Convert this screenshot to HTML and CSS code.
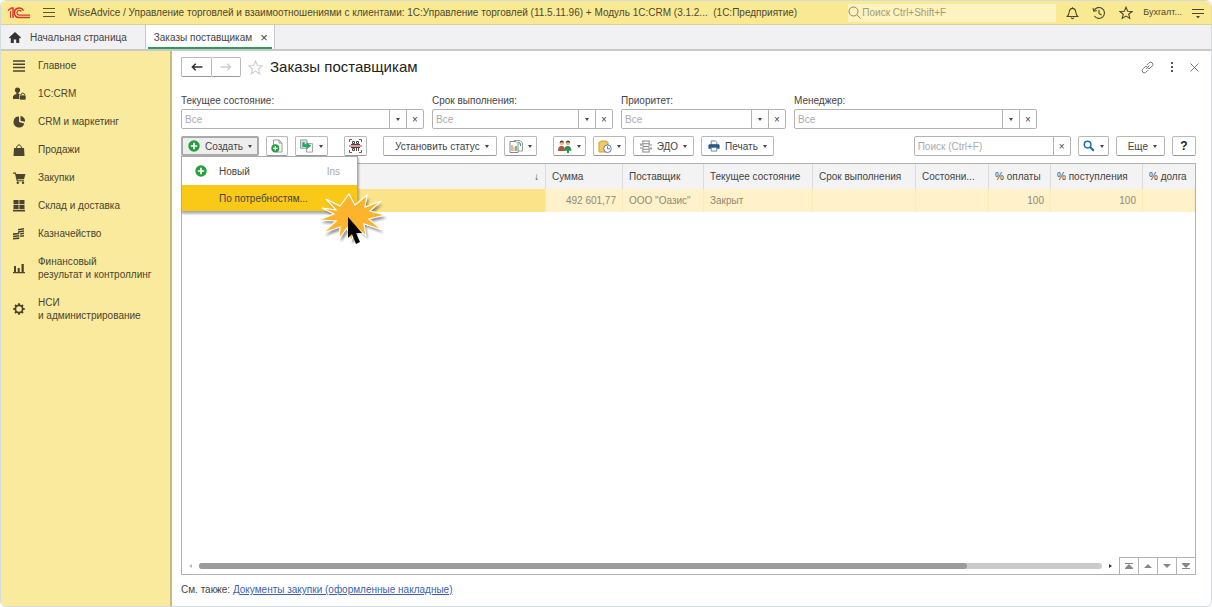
FILE: index.html
```html
<!DOCTYPE html>
<html lang="ru">
<head>
    <meta charset="UTF-8">
    <title>Заказы поставщикам</title>
    <link rel="stylesheet" href="styles.css">
</head>
<body>
    <header class="topbar">
        <svg class="logo" width="24" height="14" viewBox="0 0 24 14" fill="none" stroke="#dd3526">
            <path d="M1 4.5L4.5 2H6V12" stroke-width="1.5"/>
            <path d="M3.5 5.2V12" stroke-width="1"/>
            <path d="M16.5 4.6A4.8 4.8 0 1 0 12.5 11.6H23" stroke-width="1.5"/>
            <path d="M14.3 5.4A2.4 2.4 0 1 0 12.5 9.2H23" stroke-width="1.2"/>
        </svg>
        <button class="icon-btn burger" aria-label="Меню">
            <svg width="12" height="11" viewBox="0 0 12 11" stroke="#5d5632" stroke-width="1"><path d="M0 1.5H12M0 5.5H12M0 9.5H12"/></svg>
        </button>
        <span class="app-title">WiseAdvice / Управление торговлей и взаимоотношениями с клиентами: 1С:Управление торговлей (11.5.11.96) + Модуль 1С:CRM (3.1.2...&nbsp; (1С:Предприятие)</span>
        <label class="top-search">
            <svg width="13" height="13" viewBox="0 0 13 13" fill="none" stroke="#8d8663" stroke-width="1"><circle cx="5.5" cy="5.5" r="4.5"/><path d="M8.8 8.8L12.5 12.5"/></svg>
            <input type="text" placeholder="Поиск Ctrl+Shift+F" aria-label="Поиск">
        </label>
        <div class="top-icons">
            <button class="icon-btn" aria-label="Уведомления">
                <svg width="13" height="14" viewBox="0 0 13 14" fill="none" stroke="#4d482c" stroke-width="1.1"><path d="M6.5 1.2V2.4M1.3 10.5H11.7C10 9 10 8 9.7 5.5C9.4 3.4 8.2 2.4 6.5 2.4S3.6 3.4 3.3 5.5C3 8 3 9 1.3 10.5Z"/><path d="M5 11.5Q6.5 13.8 8 11.5"/></svg>
            </button>
            <button class="icon-btn" aria-label="История">
                <svg width="14" height="14" viewBox="0 0 14 14" fill="none" stroke="#4d482c" stroke-width="1.1"><path d="M2 4.6A5.5 5.5 0 1 1 2.4 10"/><path d="M1 2.2L1.8 5.2L4.8 4.6M7 3.8V7.5L9.6 9"/></svg>
            </button>
            <button class="icon-btn" aria-label="Избранное">
                <svg width="14" height="14" viewBox="0 0 14 14" fill="none" stroke="#4d482c" stroke-width="1.1"><path d="M7 1.2L8.7 5.2L13 5.5L9.7 8.2L10.8 12.4L7 10.1L3.2 12.4L4.3 8.2L1 5.5L5.3 5.2Z"/></svg>
            </button>
        </div>
        <a class="user" href="#">Бухгалт...</a>
        <button class="icon-btn" aria-label="Сервис">
            <svg width="12" height="12" viewBox="0 0 12 12" stroke="#4d482c" stroke-width="1"><path d="M0 2.5H12M0 6.5H12"/><path d="M4 9H8L6 11.5Z" fill="#4d482c" stroke="none"/></svg>
        </button>
    </header>

    <nav class="tabs">
        <a class="tab" href="#">
            <svg width="12" height="11" viewBox="0 0 12 11" fill="#333"><path d="M6 0L12 5.4L11 6.4L10.2 5.7V11H7.2V7.4H4.8V11H1.8V5.7L1 6.4L0 5.4Z"/></svg>
            Начальная страница
        </a>
        <a class="tab tab-active" href="#">Заказы поставщикам <span class="tab-close">×</span></a>
    </nav>

    <div class="workspace">
        <nav class="sidebar">
            <a href="#">
                <svg width="12" height="12" viewBox="0 0 12 12" stroke="#4a4430" stroke-width="1.5"><path d="M0 1H12M0 4.3H12M0 7.6H12M0 11H12"/></svg>
                Главное
            </a>
            <a href="#">
                <svg width="13" height="13" viewBox="0 0 13 13" fill="#4a4430"><circle cx="4.5" cy="3" r="2.6"/><path d="M3.4 5H5.6V7L8 8V12H0V9.2Q1 7.6 3.4 7Z"/><path d="M6.5 8H13V13H6.5Z" stroke="#f9ea9d" stroke-width=".7"/><path d="M8 8V7Q9.8 5 11.5 7V8" fill="none" stroke="#4a4430"/></svg>
                1C:CRM
            </a>
            <a href="#">
                <svg width="12" height="12" viewBox="0 0 12 12" fill="#4a4430"><path d="M6 .5A5.5 5.5 0 1 0 11.3 7.6L6 6Z"/><path d="M7.5 0A5 5 0 0 1 12 5.7L7.5 4.7Z"/></svg>
                CRM и маркетинг
            </a>
            <a href="#">
                <svg width="12" height="12" viewBox="0 0 12 12" fill="#4a4430"><path d="M1 4H11L11.5 12H.5Z"/><path d="M3.6 6V3Q6 -1.5 8.4 3V6" fill="none" stroke="#4a4430"/></svg>
                Продажи
            </a>
            <a href="#">
                <svg width="13" height="12" viewBox="0 0 13 12" fill="#4a4430"><path d="M0 .5H2.8L3.3 2H12.5L11 7.2H4.6L4.8 8.2H11V9.3H3.8L2 1.7H0Z"/><circle cx="4.8" cy="10.7" r="1.2"/><circle cx="10" cy="10.7" r="1.2"/></svg>
                Закупки
            </a>
            <a href="#">
                <svg width="12" height="12" viewBox="0 0 12 12" fill="#4a4430"><path d="M.5 0H5.6V4.3H.5ZM6.4 0H11.5V4.3H6.4ZM.5 5H5.6V9H.5ZM6.4 5H11.5V9H6.4ZM0 9.8H12V11.6H0Z"/></svg>
                Склад и доставка
            </a>
            <a href="#">
                <svg width="12" height="12" viewBox="0 0 12 12" fill="#4a4430"><path d="M5 1L11 0V1.5L5 2.5ZM5 3.3L11 2.3V3.8L5 4.8ZM7.2 5.3L11 4.6V6.1L7.2 6.8ZM7.2 7.6L11 6.9V8.4L7.2 9.1ZM0 5.3L6.3 4.7V6.3L0 6.9ZM0 7.7L6.3 7V8.5L0 9.2ZM0 10L6.3 9.3V10.9L0 11.6Z"/></svg>
                Казначейство
            </a>
            <a href="#">
                <svg width="12" height="11" viewBox="0 0 12 11" fill="#4a4430"><path d="M1 3H3V9H1ZM4.7 5H6.7V9H4.7ZM8.5 1H10.8V9H8.5ZM0 9H12V10.3H0Z"/></svg>
                Финансовый<br>результат и контроллинг
            </a>
            <a href="#">
                <svg width="12" height="12" viewBox="0 0 12 12" fill="none" stroke="#4a4430"><circle cx="6" cy="6" r="3.6" stroke-width="1.7"/><path d="M6 .3V2.5M6 9.5V11.7M.3 6H2.5M9.5 6H11.7M2 2L3.5 3.5M8.5 8.5L10 10M2 10L3.5 8.5M8.5 3.5L10 2" stroke-width="1.9"/></svg>
                НСИ<br>и администрирование
            </a>
        </nav>

        <main class="content">
            <div class="title-row">
                <div class="history">
                    <button class="btn" aria-label="Назад"><svg width="12" height="8" viewBox="0 0 12 8" fill="none" stroke="#333" stroke-width="1.6"><path d="M11.5 4H1.5M4.7 .8L1.4 4L4.7 7.2"/></svg></button>
                    <button class="btn" aria-label="Вперед"><svg width="12" height="8" viewBox="0 0 12 8" fill="none" stroke="#ccc" stroke-width="1.4"><path d="M.5 4H10.5M7.3 .8L10.6 4L7.3 7.2"/></svg></button>
                </div>
                <svg width="15" height="15" viewBox="0 0 14 14" fill="none" stroke="#ccc"><path d="M7 1L8.7 5.2L13.2 5.5L9.7 8.3L10.9 12.8L7 10.3L3.1 12.8L4.3 8.3L.8 5.5L5.3 5.2Z"/></svg>
                <h1>Заказы поставщикам</h1>
                <div class="form-tools">
                    <button class="icon-btn" aria-label="Ссылка"><svg width="13" height="13" viewBox="0 0 13 13" fill="none" stroke="#777"><path d="M5.2 7.8L8.2 4.8M6 3.8L8.2 1.6Q9.7 .4 11.2 1.8Q12.6 3.3 11.4 4.8L9.2 7Q8 8 6.8 7.2M7 9.2L4.8 11.4Q3.3 12.6 1.8 11.2Q.4 9.7 1.6 8.2L3.8 6Q5 5 6.2 5.8"/></svg></button>
                    <button class="icon-btn" aria-label="Действия"><svg width="4" height="10" viewBox="0 0 4 10" fill="#555"><path d="M1 0H3V2H1ZM1 4H3V6H1ZM1 8H3V10H1Z"/></svg></button>
                    <button class="icon-btn" aria-label="Закрыть"><svg width="9" height="9" viewBox="0 0 9 9" stroke="#777"><path d="M.5 .5L8.5 8.5M8.5 .5L.5 8.5"/></svg></button>
                </div>
            </div>

            <div class="filters">
                <div class="field field-wide">
                    <label for="state">Текущее состояние:</label>
                    <div class="combo"><input id="state" type="text" placeholder="Все"><button aria-label="Выбрать"><i class="caret"></i></button><button aria-label="Очистить">×</button></div>
                </div>
                <div class="field field-mid">
                    <label for="term">Срок выполнения:</label>
                    <div class="combo"><input id="term" type="text" placeholder="Все"><button aria-label="Выбрать"><i class="caret"></i></button><button aria-label="Очистить">×</button></div>
                </div>
                <div class="field field-small">
                    <label for="priority">Приоритет:</label>
                    <div class="combo"><input id="priority" type="text" placeholder="Все"><button aria-label="Выбрать"><i class="caret"></i></button><button aria-label="Очистить">×</button></div>
                </div>
                <div class="field field-wide">
                    <label for="manager">Менеджер:</label>
                    <div class="combo"><input id="manager" type="text" placeholder="Все"><button aria-label="Выбрать"><i class="caret"></i></button><button aria-label="Очистить">×</button></div>
                </div>
            </div>

            <div class="toolbar">
                <div class="group">
                    <div class="dropdown">
                        <button class="btn btn-pressed">
                            <svg width="12" height="12" viewBox="0 0 12 12"><circle cx="6" cy="6" r="5.7" fill="#25a03d"/><path d="M6 2.8V9.2M2.8 6H9.2" stroke="#fff" stroke-width="1.7"/></svg>
                            Создать <i class="caret"></i>
                        </button>
                        <div class="menu">
                            <button class="menu-item">
                                <svg width="12" height="12" viewBox="0 0 12 12"><circle cx="6" cy="6" r="5.7" fill="#25a03d"/><path d="M6 2.8V9.2M2.8 6H9.2" stroke="#fff" stroke-width="1.7"/></svg>
                                <span>Новый</span><kbd>Ins</kbd>
                            </button>
                            <button class="menu-item menu-item-active"><span>По потребностям...</span></button>
                            <svg class="pointer" width="72" height="54" viewBox="0 0 72 54">
                                <path class="burst-shadow" d="M12 9L26 16L35 4L41 15L53 5L51 17L67 11L56 21L71 25L55 29L68 40L50 34L52 46L43 38L37 51L33 38L25 49L26 37L9 43L22 31L5 30L20 24L8 18L22 20Z"/>
                                <path d="M10 6L24 13L33 1L39 12L51 2L49 14L65 8L54 18L69 22L53 26L66 37L48 31L50 43L41 35L35 48L31 35L23 46L24 34L7 40L20 28L3 27L18 21L6 15L20 17Z" fill="#fbb42c" stroke="#fff" stroke-width="1.2"/>
                                <path d="M32 24V45L36 41L40 51L44 49L40 40H46Z" fill="#050505"/>
                            </svg>
                        </div>
                    </div>
                    <button class="btn" aria-label="Скопировать"><svg width="12" height="14" viewBox="0 0 12 14"><path d="M2.5 1H8L11 4V13H2.5Z" fill="#fff" stroke="#999"/><path d="M8 1V4H11" fill="none" stroke="#999"/><circle cx="4.3" cy="9.3" r="4" fill="#25a03d"/><path d="M4.3 7V11.6M2 9.3H6.6" stroke="#fff" stroke-width="1.3"/></svg></button>
                    <button class="btn" aria-label="Создать на основании"><svg width="14" height="14" viewBox="0 0 15 14"><path d="M.5 .5H7.5V9.5H.5Z" fill="#ddd" stroke="#999"/><path d="M7 4.5H13.5V13.5H7Z" fill="#fff" stroke="#999"/><path d="M2.5 3V8H7V10.8L12 6.7L7 3V5H5V3Z" fill="#21aa68"/></svg><i class="caret"></i></button>
                </div>
                <button class="btn" aria-label="Штрихкод"><svg width="13" height="14" viewBox="0 0 13 14" fill="none"><path d="M3.5 2.5H5.5V4.5H3.5ZM7.5 2.5H9.5V4.5H7.5ZM3.5 9.5H5.5V11.5H3.5ZM7.5 9V12M9.5 9V12M2 5.5H11M2 8.5H11" stroke="#444"/><path d="M.5 3V.5H3M10 .5H12.5V3M.5 11V13.5H3M10 13.5H12.5V11M0 7H13" stroke="#c83232"/></svg></button>
                <div class="group">
                    <button class="btn btn-text">Установить статус <i class="caret"></i></button>
                    <button class="btn" aria-label="Отчеты"><svg width="14" height="13" viewBox="0 0 14 13"><path d="M5 .5H11L13.5 3V11H5Z" fill="#fff" stroke="#999"/><path d="M1 1.5H7L9 3.5V12.5H1Z" fill="#fff" stroke="#888"/><path d="M3 5V11" stroke="#d65c40"/><path d="M5 7V11" stroke="#dda52c"/><path d="M7 6V11" stroke="#2b9855" stroke-width="1.3"/><path d="M9 2Q12 2 11.5 6" fill="none" stroke="#2b9855"/></svg><i class="caret"></i></button>
                </div>
                <div class="group">
                    <button class="btn" aria-label="Участники"><svg width="14" height="13" viewBox="0 0 14 13"><circle cx="3.8" cy="3.3" r="2" fill="#e9b58b"/><path d="M1.6 3Q1.6 .2 4 .5Q6 .6 6 3L4 2Z" fill="#513528"/><path d="M0 11Q0 5.8 3.8 6Q7 6 7 11Z" fill="#a75535"/><circle cx="10" cy="3.3" r="2" fill="#e9b58b"/><path d="M7.8 3Q7.8 .2 10.2 .5Q12.4 .6 12.2 3L10 2Z" fill="#513528"/><path d="M6.5 10Q6.5 5.8 10 6Q13 6 13 10Z" fill="#566f80"/><path d="M10 6.5V13M6.8 9.7H13.3" stroke="#179e45" stroke-width="2"/></svg><i class="caret"></i></button>
                    <button class="btn" aria-label="Напоминания"><svg width="14" height="13" viewBox="0 0 14 13"><path d="M1 2H3V1H8V2H10V12H1Z" fill="#f2cb59" stroke="#cfa23a"/><circle cx="9.5" cy="8.7" r="3.8" fill="#fff" stroke="#6076ad"/><path d="M9.5 6.3V8.8H12" fill="none" stroke="#6076ad"/></svg><i class="caret"></i></button>
                    <button class="btn btn-label"><svg width="12" height="13" viewBox="0 0 13 13" fill="none" stroke="#888"><path d="M3 .5H10V3.5H3ZM3 9.5H10V12.5H3ZM3 6.5H10M0 5H4M9 5H13M0 8H4M9 8H13M1 3V5M12 8V10" stroke-width="1.1"/></svg>ЭДО <i class="caret"></i></button>
                    <button class="btn btn-label"><svg width="12" height="12" viewBox="0 0 13 12"><path d="M3.5 .5H8L9.5 2V5H3.5Z" fill="#fff" stroke="#65819f"/><path d="M1 4H12Q13 5 12.5 9H.5Q0 5 1 4Z" fill="#25588c"/><path d="M3.5 7.5H9.5V11.5H3.5Z" fill="#fff" stroke="#65819f"/></svg>Печать <i class="caret"></i></button>
                </div>
                <div class="group group-right">
                    <div class="combo list-search"><input type="text" placeholder="Поиск (Ctrl+F)" aria-label="Поиск в списке"><button aria-label="Очистить">×</button></div>
                    <button class="btn" aria-label="Найти"><svg width="12" height="12" viewBox="0 0 12 12" fill="none" stroke="#256ea5"><circle cx="4.6" cy="4.6" r="3.3" stroke-width="1.5"/><path d="M7 7L10.8 10.8" stroke-width="2.2"/></svg><i class="caret"></i></button>
                    <button class="btn btn-text">Еще <i class="caret"></i></button>
                    <button class="btn help">?</button>
                </div>
            </div>

            <div class="list">
                <table>
                    <colgroup>
                        <col><col class="c-sum"><col class="c-supplier"><col class="c-state"><col class="c-term"><col class="c-cond"><col class="c-paid"><col class="c-received"><col class="c-debt">
                    </colgroup>
                    <thead>
                        <tr>
                            <th class="num">↓</th>
                            <th>Сумма</th>
                            <th>Поставщик</th>
                            <th>Текущее состояние</th>
                            <th>Срок выполнения</th>
                            <th>Состояни...</th>
                            <th>% оплаты</th>
                            <th>% поступления</th>
                            <th>% долга</th>
                        </tr>
                    </thead>
                    <tbody>
                        <tr>
                            <td class="current"></td>
                            <td class="num">492 601,77</td>
                            <td>ООО "Оазис"</td>
                            <td>Закрыт</td>
                            <td></td>
                            <td></td>
                            <td class="num">100</td>
                            <td class="num">100</td>
                            <td></td>
                        </tr>
                    </tbody>
                </table>
                <div class="list-footer">
                    <i class="arrow arrow-left"></i>
                    <div class="track"><div class="thumb"></div></div>
                    <i class="arrow arrow-right"></i>
                    <div class="pager">
                        <button aria-label="В начало"><svg width="8" height="6" viewBox="0 0 8 6" fill="#888"><path d="M0 0H8V1H0ZM4 1L8 5H0ZM0 5H8V6H0Z"/></svg></button>
                        <button aria-label="Вверх"><svg width="8" height="6" viewBox="0 0 8 6" fill="#888"><path d="M4 1L8 5H0Z"/></svg></button>
                        <button aria-label="Вниз"><svg width="8" height="6" viewBox="0 0 8 6" fill="#888"><path d="M4 5L8 1H0Z"/></svg></button>
                        <button aria-label="В конец"><svg width="8" height="6" viewBox="0 0 8 6" fill="#888"><path d="M4 5L8 1H0ZM0 5H8V6H0ZM0 0H8V1H0Z"/></svg></button>
                    </div>
                </div>
            </div>

            <div class="see-also">См. также: <a href="#">Документы закупки (оформленные накладные)</a></div>
        </main>
    </div>
</body>
</html>
```
FILE: styles.css
```css
*{
    box-sizing: border-box;
}
body{
    margin: 0;
    min-height: 100vh;
    display: flex;
    flex-direction: column;
    font-family: "Liberation Sans", Arial, sans-serif;
    font-size: 10px;
    line-height: 13px;
    color: #444;
    background: #fff;
    border: 1px solid #d3dcdc;
    border-radius: 6px;
}
button,input{
    font: inherit;
    color: inherit;
    margin: 0;
}
input{
    min-width: 0;
    border: 0;
    outline: 0;
    padding: 0;
    background: none;
}
input::placeholder{
    color: #aaa;
    opacity: 1;
}
a{
    color: inherit;
    text-decoration: none;
}
svg{
    flex: none;
}
.icon-btn{
    display: flex;
    border: 0;
    padding: 0;
    background: none;
}

/* top bar */
.topbar{
    display: flex;
    align-items: center;
    height: 24px;
    padding: 0 7px 0 6px;
    background: #fae993;
    border-bottom: 1px solid #d9cf98;
    border-radius: 6px 6px 0 0;
    color: #4d482c;
}
.burger{
    margin: 0 13px 0 12px;
}
.app-title{
    flex: 1;
    min-width: 0;
    overflow: hidden;
    white-space: nowrap;
}
.top-search{
    display: flex;
    align-items: center;
    gap: 1px;
    width: 208px;
    height: 18px;
    background: #fdf3c0;
}
.top-search input{
    flex: 1;
}
.top-search input::placeholder{
    color: #a39c76;
}
.top-icons{
    display: flex;
    gap: 13px;
    margin: 0 10px;
}
.user{
    margin-right: 10px;
    font-size: 9px;
}

/* open windows */
.tabs{
    display: flex;
    height: 26px;
    background: #f1f1f3;
    border-bottom: 2px solid #c9c9cc;
}
.tab{
    display: flex;
    align-items: center;
    gap: 9px;
    padding: 0 18px 0 8px;
    border-right: 1px solid #c9c9cc;
}
.tab-active{
    padding: 0 6px 0 8px;
    gap: 8px;
    background: linear-gradient(#2c9c5c, #2c9c5c) center bottom / calc(100% - 4px) 2px no-repeat #fff;
}
.tab-close{
    font-size: 13px;
}

.workspace{
    flex: 1;
    display: flex;
}
.sidebar{
    width: 171px;
    padding: 0 0 8px 12px;
    background: #f9ea9d;
    border-right: 2px solid #cdb984;
    color: #4a4430;
}
.sidebar a{
    display: grid;
    grid-template-columns: 13px 1fr;
    align-items: center;
    column-gap: 12px;
    padding: 8px 0 7px;
    white-space: nowrap;
}
.sidebar a svg{
    grid-row: 1 / span 3;
}

/* document list form */
.content{
    flex: 1;
    min-width: 0;
    display: flex;
    flex-direction: column;
    padding: 6px 15px 10px 9px;
}
.title-row{
    display: flex;
    align-items: center;
    gap: 7px;
    height: 20px;
    margin-bottom: 17px;
}
h1{
    margin: 0;
    font-size: 15px;
    line-height: 20px;
    font-weight: normal;
    color: #222;
}
.history{
    display: flex;
}
.history .btn{
    width: 30px;
}
.history .btn:first-child{
    border-radius: 2px 0 0 2px;
    border-right: 0;
}
.form-tools{
    display: flex;
    align-items: center;
    gap: 16px;
    margin: 0 -3px 0 auto;
}
.filters{
    display: flex;
    gap: 8px;
    margin-bottom: 7px;
}
.field-wide{
    width: 243px;
}
.field-mid{
    width: 181px;
}
.field-small{
    width: 165px;
}
.field label{
    display: block;
    margin-bottom: 2px;
}
.combo{
    display: flex;
    height: 20px;
    border: 1px solid #b3b3b3;
    border-radius: 2px;
    background: #fff;
}
.combo input{
    flex: 1;
    padding-left: 3px;
}
.combo button{
    display: flex;
    align-items: center;
    justify-content: center;
    width: 17px;
    padding: 0;
    border: 0;
    border-left: 1px solid #b3b3b3;
    background: none;
}
.caret{
    border: 2px solid transparent;
    border-top: 3px solid #444;
    border-bottom: 0;
}

/* command bar */
.toolbar{
    display: flex;
    gap: 16px;
    margin-bottom: 7px;
}
.group{
    display: flex;
    gap: 7px;
}
.group-right{
    margin-left: auto;
}
.btn{
    display: flex;
    align-items: center;
    justify-content: center;
    gap: 5px;
    height: 20px;
    padding: 0 4px;
    border: 1px solid #b9b9b9;
    border-bottom-color: #999;
    border-radius: 2px;
    background: #fff;
    white-space: nowrap;
}
.btn-text{
    padding: 0 7px 0 11px;
}
.btn-label{
    padding: 0 6px;
}
.btn-pressed{
    padding: 0 5px;
    border: 2px solid #aaa;
    background: #eee;
}
.help{
    width: 24px;
    font-size: 12px;
    font-weight: bold;
    color: #222;
}
.list-search{
    width: 157px;
}
.dropdown{
    position: relative;
}
.menu{
    position: absolute;
    z-index: 2;
    top: 20px;
    left: 0;
    width: 177px;
    border: 1px solid #aaa;
    background: #fff;
    box-shadow: 1px 2px 2px rgba(0,0,0,.3);
}
.menu-item{
    display: grid;
    grid-template-columns: 12px 1fr auto;
    align-items: center;
    column-gap: 12px;
    width: 100%;
    height: 28px;
    padding: 0 17px 0 13px;
    border: 0;
    background: none;
    text-align: left;
}
.menu-item span{
    grid-column: 2;
    white-space: nowrap;
}
.menu-item kbd{
    font: inherit;
    color: #aaa;
}
.menu-item-active{
    height: 26px;
    background: #fac918;
}
.pointer{
    position: absolute;
    left: 134px;
    top: 36px;
}
.burst-shadow{
    fill: #000;
    opacity: .4;
    filter: blur(1px);
}

/* table */
.list{
    flex: 1;
    display: flex;
    flex-direction: column;
    border: 1px solid #b3b3b3;
}
table{
    width: 100%;
    table-layout: fixed;
    border-collapse: collapse;
}
.c-sum{
    width: 77px;
}
.c-supplier{
    width: 81px;
}
.c-state{
    width: 109px;
}
.c-term{
    width: 103px;
}
.c-cond{
    width: 73px;
}
.c-paid{
    width: 62px;
}
.c-received{
    width: 92px;
}
.c-debt{
    width: 52px;
}
th,td{
    height: 25px;
    padding: 0 6px;
    text-align: left;
    font-weight: normal;
    white-space: nowrap;
}
th{
    background: #f3f3f4;
    border-right: 1px solid #dcdcdc;
}
th:last-child{
    border-right: 0;
}
td{
    height: 23px;
    background: #fff1ca;
    border-right: 1px solid #fdeabb;
    color: #8f8977;
}
.num{
    text-align: right;
}
.current{
    background: #fbe389;
}
.list-footer{
    display: flex;
    align-items: center;
    gap: 7px;
    height: 17px;
    margin-top: auto;
    padding-left: 7px;
}
.track{
    flex: 1;
    height: 6px;
    border-radius: 3px;
    background: #cacaca;
}
.thumb{
    width: 85%;
    height: 6px;
    border-radius: 3px;
    background: #9b9b9b;
}
.arrow{
    border: 2px solid transparent;
}
.arrow-left{
    border-left-width: 0;
    border-right: 3px solid #bbb;
}
.arrow-right{
    border-right-width: 0;
    border-left: 3px solid #333;
}
.pager{
    display: flex;
    height: 17px;
    border-top: 1px solid #b3b3b3;
}
.pager button{
    display: flex;
    align-items: center;
    justify-content: center;
    width: 19px;
    padding: 0;
    border: 0;
    border-left: 1px solid #b3b3b3;
    background: #fff;
}
.see-also{
    margin-top: 8px;
}
.see-also a{
    color: #3a62ad;
    text-decoration: underline;
}
```
